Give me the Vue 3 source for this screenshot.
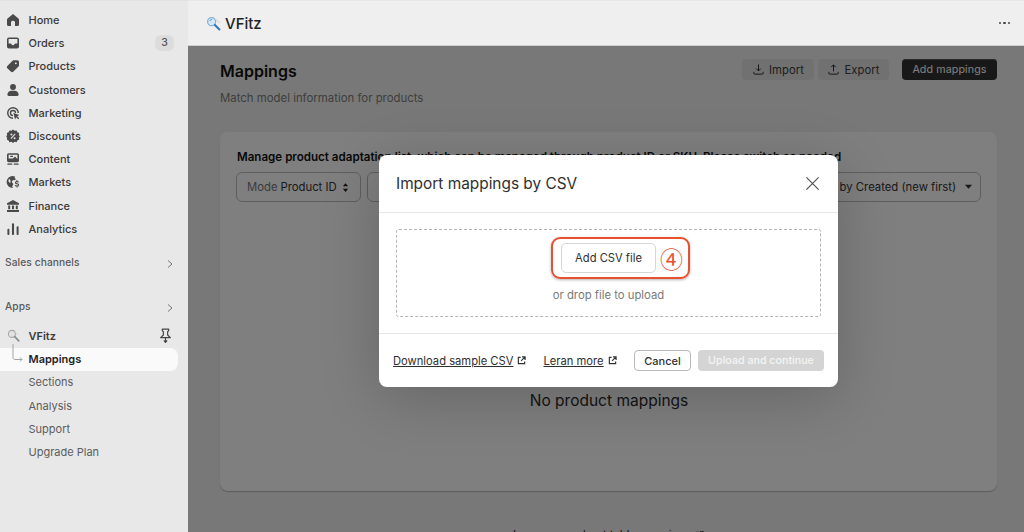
<script setup>
const navItems = [
  { label: 'Home', d: 'M10 2.600 3.200 8.200C2.800 8.600 2.500 9.100 2.500 9.700V15.500C2.500 16.600 3.400 17.500 4.500 17.500H7.500V13C7.500 11.900 8.400 11 9.500 11H10.500C11.600 11 12.500 11.900 12.500 13V17.500H15.500C16.600 17.500 17.500 16.600 17.500 15.500V9.700C17.500 9.100 17.200 8.600 16.800 8.200Z' },
  { label: 'Orders', badge: '3', d: 'M5 3H15C16.400 3 17.500 4.100 17.500 5.500V14.500C17.500 15.900 16.400 17 15 17H5C3.600 17 2.500 15.900 2.500 14.500V5.500C2.500 4.100 3.600 3 5 3ZM4.500 10.500H7C7.600 10.500 8 11 8.200 11.500 8.500 12.300 9.200 12.700 10 12.700S11.500 12.300 11.800 11.500C12 11 12.400 10.500 13 10.500H15.500V5.500C15.500 5.200 15.300 5 15 5H5C4.700 5 4.500 5.200 4.500 5.500Z' },
  { label: 'Products', d: 'M11 2.800H15.500C16.600 2.800 17.500 3.700 17.500 4.800V9.300C17.500 9.800 17.300 10.400 16.900 10.700L10.300 17.300C9.500 18.100 8.200 18.100 7.500 17.300L2.900 12.700C2.100 12 2.100 10.700 2.900 9.900L9.500 3.400C9.900 3 10.400 2.800 11 2.800ZM13.500 5.500A1.200 1.200 0 1 0 13.500 7.900 1.200 1.200 0 0 0 13.500 5.500Z' },
  { label: 'Customers', d: 'M10 2.500A3.700 3.700 0 1 1 10 9.900 3.700 3.700 0 0 1 10 2.500ZM3 15.500C3 13 5.500 11 8 11H12C14.500 11 17 13 17 15.500V16C17 16.800 16.300 17.500 15.500 17.500H4.500C3.700 17.500 3 16.800 3 16Z' },
  { label: 'Marketing', d: 'M10 2.500A7.500 7.500 0 0 1 17.500 10H15.700A5.700 5.700 0 1 0 10 15.700V17.500A7.500 7.500 0 0 1 10 2.500ZM10 6A4 4 0 0 1 14 10H12.300A2.300 2.300 0 1 0 10 12.300V14A4 4 0 0 1 10 6ZM10.500 10 18 12.500 15.200 14 17.800 16.600 16.600 17.800 14 15.200 12.500 18Z' },
  { label: 'Discounts', d: 'M10 1.800 12 3.300 14.500 3 15.500 5.200 17.700 6.200 17.300 8.700 18.500 10.500 17.300 12.300 17.700 14.500 15.500 15.500 14.500 17.700 12 17.300 10 18.700 8 17.300 5.500 17.700 4.500 15.500 2.300 14.500 2.700 12.300 1.500 10.500 2.700 8.700 2.300 6.200 4.500 5.200 5.500 3 8 3.300ZM8 7A1.200 1.200 0 1 0 8 9.400 1.200 1.200 0 0 0 8 7ZM12 11.600A1.200 1.200 0 1 0 12 14 1.200 1.200 0 0 0 12 11.600ZM12.300 6.900 6.900 12.800 7.800 13.600 13.200 7.700Z' },
  { label: 'Content', d: 'M4.500 2.800H15.500C16.600 2.800 17.500 3.700 17.500 4.800V12C17.500 13.100 16.600 14 15.500 14H4.500C3.400 14 2.500 13.100 2.500 12V4.800C2.500 3.700 3.400 2.800 4.500 2.800ZM4.500 4.600V9.500H10L12.500 7 15.500 10V4.600ZM6.500 5.800H10V7.500H6.500ZM3 15.700H9V17.200H3ZM11 15.700H17V17.200H11Z' },
  { label: 'Markets', d: 'M9.500 2.500C10.700 2.500 11.800 2.800 12.800 3.300L11.800 5 13.800 6.300 12 7.800C10.800 7.300 9.600 7.600 9 8.600 8.300 9.800 8.800 11 10 11.500L10.300 13.500 9 15.400 9.800 17.500H9.500A7.500 7.500 0 0 1 9.500 2.500ZM4.800 6.300 4.200 9 6.500 11.500 7 9 6.400 6.800ZM15.500 7.500V8.800C16.500 9 17.500 9.700 17.500 10.700H16C16 10.200 15.500 10 15 10 14.300 10 14 10.300 14 10.700 14 11.200 14.500 11.300 15.300 11.500 16.500 11.800 17.700 12.200 17.700 13.700 17.700 14.800 16.800 15.500 15.800 15.700V17H14.500V15.700C13.400 15.500 12.400 14.800 12.300 13.600H13.900C14 14.100 14.500 14.400 15.100 14.400 15.800 14.400 16.200 14.100 16.200 13.700 16.200 13.200 15.700 13 15 12.900 13.800 12.600 12.500 12.200 12.500 10.800 12.500 9.800 13.300 9 14.300 8.800V7.500Z' },
  { label: 'Finance', d: 'M10 2.500 17.500 6.500V8.500H2.500V6.500ZM4 9.500H6.500V14H4ZM8.700 9.500H11.300V14H8.700ZM13.500 9.500H16V14H13.500ZM2.500 15H17.500V17.500H2.500Z' },
  { label: 'Analytics', d: 'M3 11C3 10.300 3.500 9.800 4.200 9.800S5.500 10.300 5.500 11V16.200C5.500 16.900 4.900 17.500 4.200 17.500S3 16.900 3 16.200ZM8.700 4C8.700 3.300 9.300 2.700 10 2.700S11.300 3.300 11.300 4V16.200C11.300 16.900 10.700 17.500 10 17.500S8.700 16.900 8.700 16.200ZM14.500 8C14.500 7.300 15.100 6.700 15.800 6.700S17 7.300 17 8V16.200C17 16.900 16.500 17.500 15.800 17.500S14.500 16.900 14.500 16.200Z' }
]
const subItems = ['Sections', 'Analysis', 'Support', 'Upgrade Plan']
</script>

<template>
  <div class="screen">
    <aside class="sidebar">
      <nav class="nav">
        <div v-for="item in navItems" :key="item.label" class="row">
          <svg class="nav-icon" viewBox="0 0 20 20"><path :d="item.d" fill="#4a4a4a" fill-rule="evenodd" /></svg>
          <span class="row-label">{{ item.label }}</span>
          <span v-if="item.badge" class="badge">{{ item.badge }}</span>
        </div>
      </nav>

      <div class="section first-section">
        <span>Sales channels</span>
        <svg class="chevron" viewBox="0 0 10 10"><path d="M3 1.500 7 5 3 8.500" fill="none" stroke="#777" stroke-width="1" /></svg>
      </div>
      <div class="section">
        <span>Apps</span>
        <svg class="chevron" viewBox="0 0 10 10"><path d="M3 1.500 7 5 3 8.500" fill="none" stroke="#777" stroke-width="1" /></svg>
      </div>

      <div class="row app-row">
        <svg class="app-logo" viewBox="0 0 16 16">
          <circle cx="6" cy="6" r="4.300" fill="#e2e2e2" stroke="#a8a8a8" stroke-width="1.300" />
          <path d="M9.500 3.500 14 7" stroke="#d2d2d2" stroke-width="1.200" />
          <path d="M9.500 9.500 14.500 14.500" stroke="#8e8e8e" stroke-width="2.200" stroke-linecap="round" />
        </svg>
        <span class="row-label app-name">VFitz</span>
        <svg class="pin" viewBox="0 0 14 14">
          <path d="M4 1H10V2.500L9 3.500V6.500L11.500 9H2.500L5 6.500V3.500L4 2.500ZM7 9V13.500M5.500 11.500 7 13.500 8.500 11.500" fill="none" stroke="#444" stroke-width="1.100" stroke-linejoin="round" />
        </svg>
      </div>
      <div class="row sub-active">
        <svg class="connector" viewBox="0 0 12 22">
          <path d="M1 0V13.500C1 15 2 15.500 3 15.500H10M8 13.500 10 15.500 8 17.500" fill="none" stroke="#a3a3a3" stroke-width="1" />
        </svg>
        <span class="row-label">Mappings</span>
      </div>
      <div v-for="sub in subItems" :key="sub" class="row sub-row">
        <span class="row-label">{{ sub }}</span>
      </div>
    </aside>

    <div class="workspace">
      <header class="topbar">
        <div class="brand">
          <svg class="brand-logo" viewBox="0 0 16 16">
            <circle cx="6" cy="6" r="4.300" fill="#d5e8f7" stroke="#7fb2de" stroke-width="1.300" />
            <path d="M3.800 5.500C4.300 4.300 5.400 3.700 6.500 3.900" fill="none" stroke="#3f86c6" stroke-width="0.900" />
            <path d="M9.500 9.500 14.300 14.300" stroke="#3578b5" stroke-width="2.200" stroke-linecap="round" />
            <path d="M10 3 15 7.500" stroke="#e4d9c8" stroke-width="1.200" />
          </svg>
          <span>VFitz</span>
        </div>
        <div class="dots"><i></i><i></i><i></i></div>
      </header>

      <main class="page">
        <div class="page-head">
          <div>
            <h1>Mappings</h1>
            <p>Match model information for products</p>
          </div>
          <div class="actions">
            <button class="soft-btn import-btn">
              <svg viewBox="0 0 14 14"><path d="M7 1.500V8.500M4.500 6 7 8.500 9.500 6M2 9.500V11C2 11.700 2.500 12 3 12H11C11.500 12 12 11.700 12 11V9.500" fill="none" stroke="#222" stroke-width="1" /></svg>
              Import
            </button>
            <button class="soft-btn export-btn">
              <svg viewBox="0 0 14 14"><path d="M7 9V2M4.500 4.500 7 2 9.500 4.500M2 9.500V11C2 11.700 2.500 12 3 12H11C11.500 12 12 11.700 12 11V9.500" fill="none" stroke="#222" stroke-width="1" /></svg>
              Export
            </button>
            <button class="primary-btn">Add mappings</button>
          </div>
        </div>

        <section class="card">
          <h2>Manage product adaptation list, which can be managed through product ID or SKU. Please switch as needed</h2>
          <div class="filters">
            <div class="select mode">
              <span class="muted">Mode</span> Product ID
              <svg viewBox="0 0 8 12"><path d="M4 1 7 4.500H1ZM4 11 1 7.500H7Z" fill="#222" /></svg>
            </div>
            <div class="select search"></div>
            <div class="select sort">
              Sort by Created (new first)
              <svg viewBox="0 0 10 6"><path d="M1 .5H9L5 5Z" fill="#333" /></svg>
            </div>
          </div>
          <div class="empty">No product mappings</div>
        </section>

        <div class="learn">
          Learn more about table mappings
          <svg viewBox="0 0 10 10"><path d="M4 1.500H1.500V8.500H8.500V6M5.500 1H9V4.500M9 1 4.500 5.500" fill="none" stroke="#222" stroke-width="1.300" /></svg>
        </div>
      </main>
    </div>

    <div class="scrim"></div>

    <div class="modal">
      <div class="modal-head">
        <span>Import mappings by CSV</span>
        <svg class="close" viewBox="0 0 16 16"><path d="M1.500 1.500 14.500 14.500M14.500 1.500 1.500 14.500" stroke="#555" stroke-width="1.300" /></svg>
      </div>
      <div class="modal-body">
        <div class="dropzone">
          <div class="callout">
            <button class="file-btn">Add CSV file</button>
            <span class="step">④</span>
          </div>
          <span class="drop-hint">or drop file to upload</span>
        </div>
      </div>
      <div class="modal-foot">
        <a class="ext">Download sample CSV
          <svg viewBox="0 0 10 10"><path d="M4 1.500H1.500V8.500H8.500V6M5.500 1H9V4.500M9 1 4.500 5.500" fill="none" stroke="#333" stroke-width="1.300" /></svg>
        </a>
        <a class="ext second">Leran more
          <svg viewBox="0 0 10 10"><path d="M4 1.500H1.500V8.500H8.500V6M5.500 1H9V4.500M9 1 4.500 5.500" fill="none" stroke="#333" stroke-width="1.300" /></svg>
        </a>
        <button class="cancel">Cancel</button>
        <button class="upload">Upload and continue</button>
      </div>
    </div>
  </div>
</template>

<style>
html, body { margin: 0; overflow: hidden; }
</style>

<style scoped>
.screen {
  position: relative;
  width: 1024px;
  height: 532px;
  display: flex;
  overflow: hidden;
  font-family: Inter, "Liberation Sans", sans-serif;
  background: #f1f1f1;
  color: #303030;
}
.sidebar {
  width: 188px;
  flex: none;
  box-sizing: border-box;
  padding-top: 7.500px;
  background: #e8e8e8;
  border-top: 1px solid #e2e2e2;
}
.row {
  position: relative;
  height: 23.200px;
  display: flex;
  align-items: center;
  gap: 7.500px;
  padding: 0 14px 0 5px;
  width: 178px;
  box-sizing: border-box;
  font-size: 11px;
  font-weight: 500;
  color: #3a3a3a;
}
.nav-icon { width: 16px; height: 16px; flex: none; }
.row-label { flex: 1; white-space: nowrap; }
.badge {
  width: 19px;
  height: 16px;
  border-radius: 6px;
  background: #dcdcdc;
  color: #555;
  font-size: 10.500px;
  line-height: 16px;
  text-align: center;
  margin-right: -10px;
}
.section {
  height: 23px;
  display: flex;
  align-items: center;
  justify-content: space-between;
  padding: 0 14px 0 5px;
  margin-top: 21px;
  font-size: 10.200px;
  font-weight: 500;
  color: #5a5a5a;
  letter-spacing: .1px;
}
.first-section { margin-top: 10px; }
.chevron { width: 10px; height: 10px; margin: 4px -1px 0 0; }
.app-row { margin-top: 7px; }
.app-logo { width: 13px; height: 13px; flex: none; margin: -1px 1px 0 2px; }
.app-name { font-weight: 600; }
.pin { width: 15px; height: 15px; margin-right: -9px; }
.sub-active {
  padding-left: 28.500px;
  background: #fafafa;
  border-radius: 0 8px 8px 0;
  font-weight: 600;
  color: #1f1f1f;
}
.connector {
  position: absolute;
  left: 12px;
  top: -4px;
  width: 12px;
  height: 22px;
}
.sub-row { padding-left: 28.500px; color: #5c5c5c; font-weight: 400; }

.workspace { flex: 1; min-width: 0; display: flex; flex-direction: column; }
.topbar {
  height: 46px;
  flex: none;
  box-sizing: border-box;
  display: flex;
  align-items: center;
  justify-content: space-between;
  padding: 0 14px 0 18px;
  background: #efefef;
  border-top: 1px solid #e6e6e6;
  border-bottom: 1px solid #d0d0d0;
}
.brand {
  display: flex;
  align-items: center;
  gap: 4px;
  font-size: 15px;
  font-weight: 500;
  color: #222;
}
.brand-logo { width: 15px; height: 15px; }
.dots { display: flex; gap: 2px; }
.dots i { width: 2.500px; height: 2.500px; border-radius: 50%; background: #444; }

.page { flex: 1; padding: 13px 27px 0 32px; min-height: 0; }
.page-head { display: flex; justify-content: space-between; height: 73px; }
h1 {
  margin: 0;
  padding-top: 2px;
  font-size: 16px;
  line-height: 20px;
  font-weight: 600;
  color: #111;
}
.page-head p { margin: 10px 0 0; font-size: 11.400px; line-height: 14px; color: #7c7c7c; font-weight: 400; }
.actions { display: flex; align-items: flex-start; gap: 4px; }
.actions button {
  height: 21px;
  padding: 0;
  font: 400 11.200px Inter, sans-serif;
  letter-spacing: .1px;
  border-radius: 4px;
  border: 0;
  display: flex;
  align-items: center;
  justify-content: center;
}
.soft-btn { gap: 4px; background: #e3e3e3; color: #3a3a3a; }
.import-btn { width: 72px; }
.export-btn { width: 71px; }
.soft-btn svg { width: 13px; height: 13px; }
.actions .primary-btn { width: 95px; margin-left: 9px; font-size: 10.700px; background: #303030; color: #fff; box-shadow: inset 0 1px 0 #555; }

.card {
  height: 359px;
  box-sizing: border-box;
  padding: 18px 16px 0 17px;
  background: #fff;
  border-radius: 8px;
  box-shadow: 0 1px 1px rgba(0,0,0,.25);
}
h2 { margin: 0; font-size: 11.600px; line-height: 14px; font-weight: 600; color: #111; white-space: nowrap; }
.filters { display: flex; gap: 6px; margin-top: 8px; }
.select {
  height: 30px;
  box-sizing: border-box;
  display: flex;
  align-items: center;
  border: 1px solid #bcbcbc;
  border-radius: 6px;
  font-size: 11.300px;
  color: #333;
  white-space: nowrap;
}
.mode { width: 125px; margin-left: -1px; padding-left: 10px; gap: 3px; flex: none; }
.mode svg { width: 7px; height: 11px; margin-left: 2px; }
.muted { color: #777; }
.search { flex: 1; }
.sort { width: 200px; flex: none; justify-content: flex-end; padding-right: 7px; gap: 8px; }
.sort svg { width: 9px; height: 6px; }
.empty { margin-top: 189px; text-align: center; font-size: 15.500px; line-height: 20px; color: #2a2a2a; }
.learn {
  margin-top: 37px;
  display: flex;
  justify-content: center;
  align-items: center;
  gap: 4px;
  font-size: 11.200px;
  line-height: 14px;
  color: #222;
}
.learn svg { width: 9px; height: 9px; }

.scrim {
  position: absolute;
  left: 188px;
  right: 0;
  top: 46px;
  bottom: 0;
  background: rgba(0,0,0,.5);
}
.modal {
  position: absolute;
  left: 379px;
  top: 155px;
  width: 459px;
  height: 232px;
  display: flex;
  flex-direction: column;
  background: #fff;
  border-radius: 8px;
  box-shadow: 0 12px 60px rgba(0,0,0,.2);
  box-sizing: border-box;
}
.modal-head {
  height: 58px;
  flex: none;
  box-sizing: border-box;
  display: flex;
  align-items: center;
  justify-content: space-between;
  padding: 0 18px 0 17px;
  border-bottom: 1px solid #e6e6e6;
  font-size: 15.400px;
  color: #303030;
}
.close { width: 15px; height: 15px; }
.modal-body { height: 121px; flex: none; box-sizing: border-box; padding: 16px 17px; border-bottom: 1px solid #e6e6e6; }
.dropzone {
  height: 88px;
  box-sizing: border-box;
  border: 1px dashed #b5b5b5;
  border-radius: 3px;
  display: flex;
  flex-direction: column;
  align-items: center;
  padding-top: 6.500px;
}
.callout {
  display: flex;
  align-items: center;
  gap: 4px;
  height: 42px;
  margin-left: 24px;
  box-sizing: border-box;
  padding: 0 5px 0 8px;
  border: 2px solid #e9502f;
  border-radius: 9px;
  box-shadow: 0 1px 3px rgba(0,0,0,.3);
}
.file-btn {
  width: 95px;
  height: 30px;
  padding: 0;
  background: #fff;
  border: 1px solid #d6d6d6;
  border-radius: 5px;
  font: 400 11.200px Inter, sans-serif;
  color: #303030;
}
.step { font-size: 23px; line-height: 24px; color: #e9502f; font-family: "Noto Sans CJK SC", "DejaVu Sans", sans-serif; font-weight: 400; }
.drop-hint { margin-top: 9.500px; font-size: 11.300px; line-height: 14px; color: #7a7a7a; }
.modal-foot {
  flex: 1;
  display: flex;
  align-items: center;
  padding: 0 14px;
  font-size: 11.200px;
}
.ext { display: flex; align-items: center; gap: 4px; text-decoration: underline; color: #303030; white-space: nowrap; }
.ext svg { width: 9px; height: 9px; }
.second { margin-left: 17px; }
.cancel {
  margin-left: auto;
  width: 57px;
  height: 21px;
  padding: 0;
  background: #fff;
  border: 1px solid #b9b9b9;
  border-radius: 4px;
  font: 500 11px Inter, sans-serif;
  color: #303030;
}
.upload {
  margin-left: 7px;
  width: 126px;
  height: 21px;
  padding: 0;
  border: 0;
  border-radius: 4px;
  background: #d4d4d4;
  color: #f4f4f4;
  font: 500 10.700px Inter, sans-serif;
}
</style>
